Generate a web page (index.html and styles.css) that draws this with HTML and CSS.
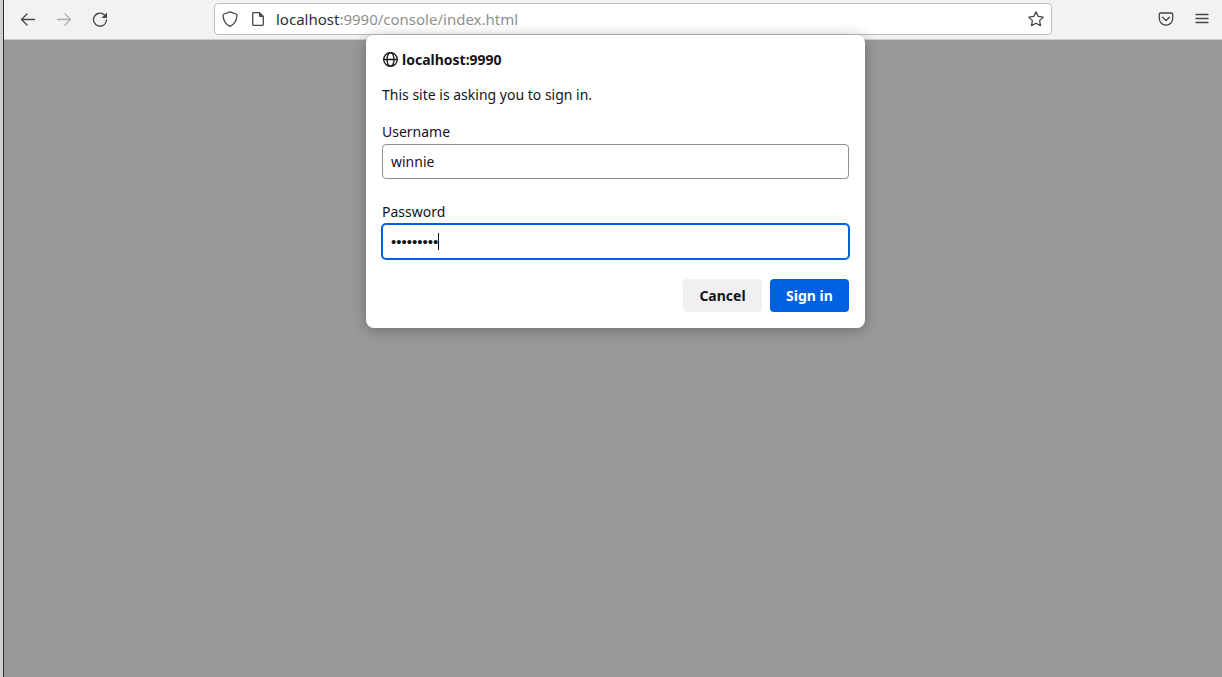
FILE: index.html
```html
<!DOCTYPE html>
<html lang="en">
<head>
    <meta charset="UTF-8">
    <meta name="viewport" content="width=device-width, initial-scale=1.0">
    <title>localhost:9990</title>
    <link rel="stylesheet" href="styles.css">
</head>
<body>
    <div class="desktop-edge"></div>
    <div class="browser">
        <header class="toolbar">
            <nav class="nav-buttons">
                <button class="icon-button" aria-label="Back">
                    <svg width="16" height="16" viewBox="0 0 16 16"><path d="M14.500 8.500H1.500M7 3L1.500 8.500 7 14"/></svg>
                </button>
                <button class="icon-button" aria-label="Forward" disabled>
                    <svg width="16" height="16" viewBox="0 0 16 16"><path d="M1.500 8.500h13M9 3l5.500 5.500L9 14"/></svg>
                </button>
                <button class="icon-button" aria-label="Reload">
                    <svg width="16" height="16" viewBox="0 0 16 16"><path d="M12.500 4A6.500 6.500 0 1 0 14.500 9"/><path class="solid" d="M15 1.500V7H9.500z"/></svg>
                </button>
            </nav>
            <div class="address-bar">
                <svg width="16" height="16" viewBox="0 0 16 16"><path d="M8 .8l6 2.200c1 .4 1 1 .9 2C14.500 9.500 12 13.500 8 15.300C4 13.500 1.500 9.500 1.100 5c-.1-1-.1-1.600.9-2z"/></svg>
                <svg width="16" height="16" viewBox="0 0 16 16"><path d="M9.500 1.700H3.500q-.8 0-.8.800v11q0 .8.800.800h9q.8 0 .8-.8V5.500z"/><path class="solid" d="M9 1.500v3.500q0 1 1 1h3.500z"/></svg>
                <div class="url" role="textbox" aria-label="Address" contenteditable="true" spellcheck="false"><span class="host">localhost</span>:9990/console/index.html</div>
                <button class="icon-button" aria-label="Bookmark this page">
                    <svg width="16" height="16" viewBox="0 0 16 16"><path d="M8 .9l2.200 4.500 5 .7-3.600 3.500.9 5L8 12.200l-4.500 2.400.9-5L.8 6.100l5-.7z"/></svg>
                </button>
            </div>
            <div class="tool-buttons">
                <button class="icon-button" aria-label="Save to Pocket">
                    <svg width="16" height="16" viewBox="0 0 16 16"><path d="M2.500 2h11q1.200 0 1.200 1.200V7.500a6.700 6.700 0 0 1-13.400 0V3.200Q1.300 2 2.500 2z"/><path d="M4.500 6.200L8 9.500l3.500-3.300"/></svg>
                </button>
                <button class="icon-button" aria-label="Menu">
                    <svg width="16" height="16" viewBox="0 0 16 16"><path d="M2 3.500h12M2 7.500h12M2 11.500h12"/></svg>
                </button>
            </div>
        </header>
        <main class="page"></main>
        <div class="dialog-layer">
            <form class="dialog" role="dialog" aria-labelledby="site" onsubmit="return false">
                <h1 class="site" id="site">
                    <svg width="16" height="16" viewBox="0 0 16 16"><circle cx="8.500" cy="7.500" r="6.800"/><ellipse cx="8.500" cy="7.500" rx="3.500" ry="6.800"/><path d="M2 7.500h13"/></svg>
                    localhost:9990
                </h1>
                <p class="message">This site is asking you to sign in.</p>
                <label for="username">Username</label>
                <input type="text" id="username" class="field" value="winnie">
                <label for="password">Password</label>
                <div class="password-box">
                    <input type="password" id="password" class="field password" value="123456789" autofocus>
                    <span class="caret"></span>
                </div>
                <div class="actions">
                    <button type="button" class="button">Cancel</button>
                    <button type="submit" class="button primary">Sign in</button>
                </div>
            </form>
        </div>
    </div>
</body>
</html>
```
FILE: styles.css
```css
* { box-sizing: border-box; }
body { display: flex; min-height: 100vh; margin: 0; font: 14px/20px "Noto Sans", sans-serif; color: #15141a; }
svg { flex: none; fill: none; stroke: currentColor; stroke-width: 1.3; stroke-linejoin: round; stroke-linecap: round; }
.solid { fill: currentColor; stroke: none; }
button { font: inherit; color: inherit; border: 0; cursor: pointer; }

.desktop-edge { flex: none; width: 4px; background: #d0d0ce; border-right: 1px solid #2c2c2c; }
.browser { position: relative; flex: 1; display: flex; flex-direction: column; }

.toolbar { display: flex; align-items: flex-start; height: 40px; padding: 3px 4px 0 8px; background: #f3f2f0; border-bottom: 1px solid #cfcdcb; color: #45454a; }
.nav-buttons, .tool-buttons { display: flex; align-items: center; height: 32px; gap: 4px; }
.nav-buttons { width: 202px; }
.tool-buttons { width: 166px; justify-content: flex-end; }
.icon-button { display: flex; padding: 8px; background: none; }
.icon-button:disabled { opacity: 0.4; }
.address-bar { flex: 1; display: flex; align-items: center; gap: 12px; height: 32px; padding-left: 7px; background: #fff; border: 1px solid #bfbdba; border-radius: 4px; }
.address-bar .icon-button { padding: 7px; }
.url { flex: 1; margin-left: -2px; outline: 0; color: #8f8f8f; font-size: 15px; }
.host { color: #2e2e33; }

.page { flex: 1; background: #99999a; }

.dialog-layer { position: absolute; top: 35px; left: 0; right: 0; display: flex; justify-content: center; padding-left: 5px; pointer-events: none; }
.dialog { display: flex; flex-direction: column; width: 499px; max-width: 100%; padding: 15px 16px 16px; background: #fff; border-radius: 8px; box-shadow: 0 2px 14px rgba(0, 0, 0, 0.3); pointer-events: auto; }
.site { display: flex; align-items: center; gap: 4px; margin: 0; font-size: 14px; line-height: 20px; }
.message { margin: 15px 0 17px; }
label { margin-bottom: 2px; }
.field { height: 35px; margin-bottom: 23px; padding: 0 8px; font: inherit; color: inherit; background: #fff; border: 1px solid #8f8f9d; border-radius: 4px; }
.field:focus { border-color: #0061e0; outline: 0; box-shadow: 0 0 0 1px #0061e0; }
.password-box { position: relative; display: flex; margin-bottom: 20px; }
.password { flex: 1; margin: 0; font-family: "Liberation Sans", sans-serif; font-size: 15px; caret-color: transparent; }
.caret { position: absolute; top: 9px; left: 56px; width: 1px; height: 17px; background: #15141a; }
.actions { display: flex; justify-content: flex-end; gap: 8px; }
.button { min-width: 79px; height: 33px; padding: 0 16px; background: #f0f0f2; border-radius: 4px; font-weight: bold; }
.primary { background: #0061e0; color: #fff; }
```
